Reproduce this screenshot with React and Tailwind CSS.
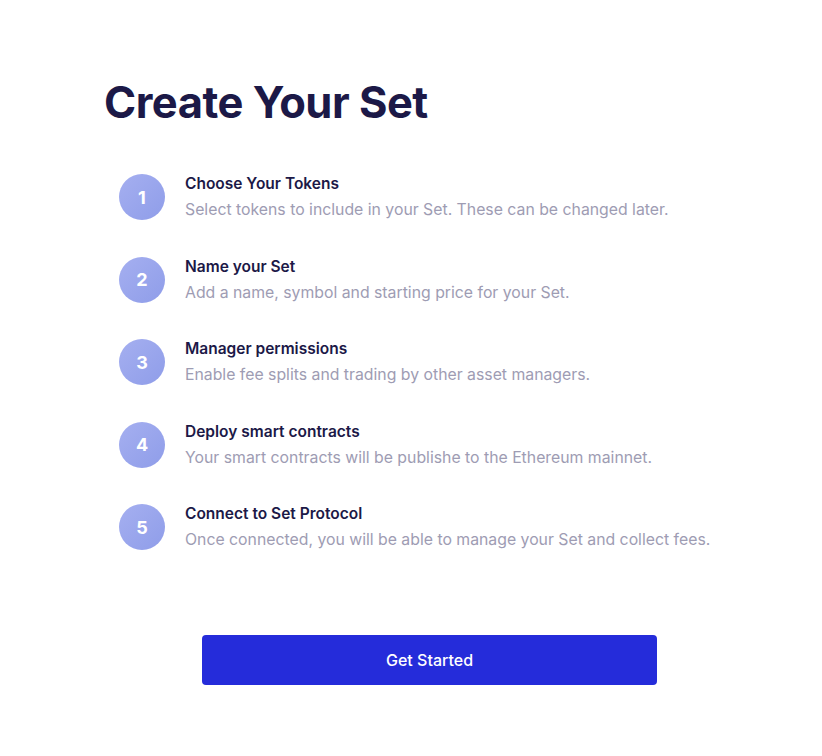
const steps = [
  { title: "Choose Your Tokens", text: "Select tokens to include in your Set. These can be changed later." },
  { title: "Name your Set", text: "Add a name, symbol and starting price for your Set." },
  { title: "Manager permissions", text: "Enable fee splits and trading by other asset managers." },
  { title: "Deploy smart contracts", text: "Your smart contracts will be publishe to the Ethereum mainnet." },
  { title: "Connect to Set Protocol", text: "Once connected, you will be able to manage your Set and collect fees." },
];

export default function App() {
  return (
    <div className="min-h-screen bg-white font-['Inter',sans-serif]">
      <div className="pl-[104px] pt-[76px]">
        <h1 className="text-[43.5px] font-bold leading-[52px] tracking-[-0.5px] text-[#1c1947]">
          Create Your Set
        </h1>
        <div className="mt-[45px] ml-[15px] flex flex-col gap-[34.5px]">
          {steps.map((s, i) => (
            <div key={i} className="flex items-center">
              <div className="flex h-[46px] w-[46px] shrink-0 items-center justify-center rounded-full bg-gradient-to-br from-[#a5aff0] to-[#8f9de9] text-[18px] font-bold text-white">
                {i + 1}
              </div>
              <div className="ml-[20px] flex flex-col">
                <div className="text-[15.5px] font-semibold leading-[22px] text-[#1c1947]">{s.title}</div>
                <div className="mt-[4px] text-[15.8px] leading-[22px] text-[#9e9cb3]">{s.text}</div>
              </div>
            </div>
          ))}
        </div>
      </div>
      <div className="mt-[84px] flex justify-center pl-[37px]">
        <button className="h-[50px] w-[455px] rounded-[4px] bg-[#252cda] text-[16px] font-medium text-white">
          Get Started
        </button>
      </div>
    </div>
  );
}
